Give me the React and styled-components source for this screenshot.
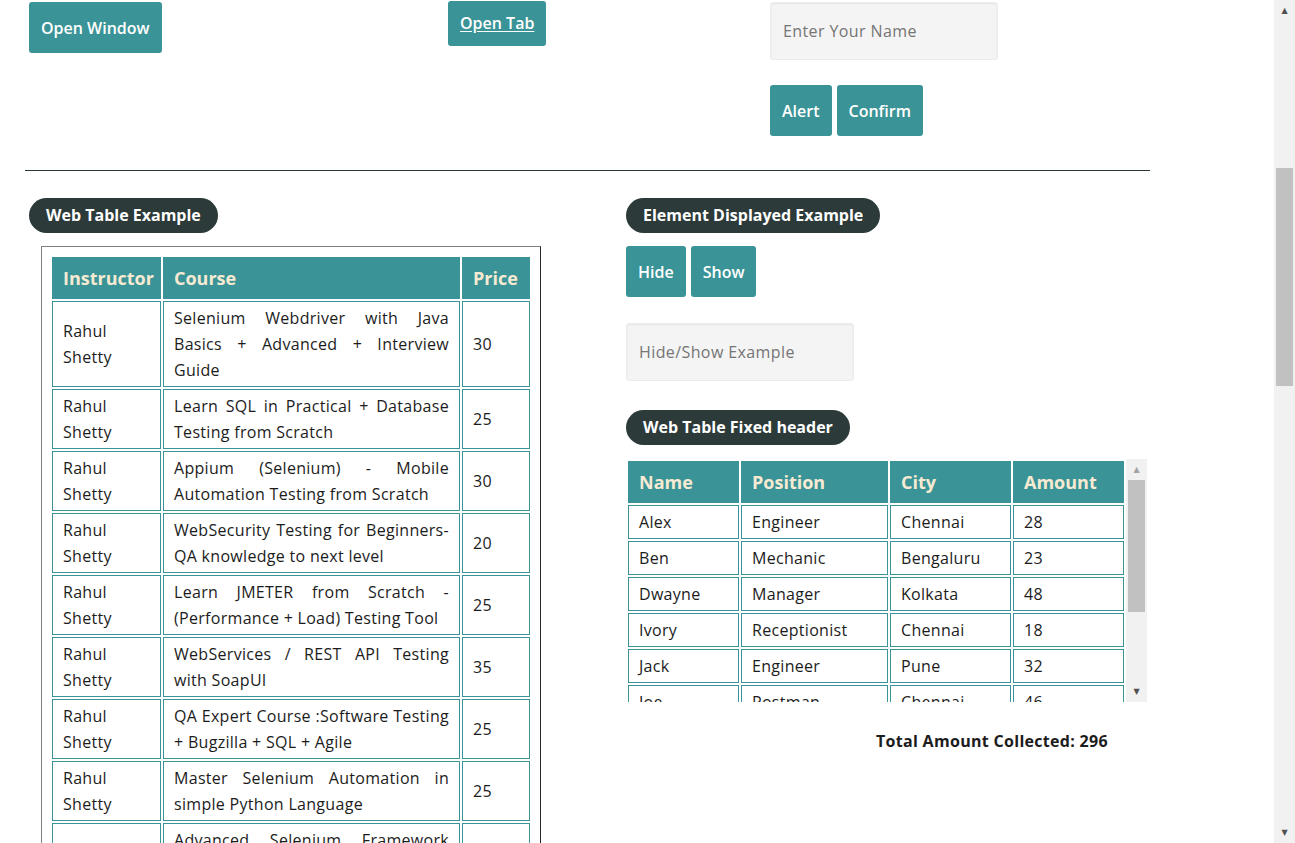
import React from "react";
import styled, { createGlobalStyle } from "styled-components";

const courses = [
  { course: "Selenium Webdriver with Java Basics + Advanced + Interview Guide", price: 30 },
  { course: "Learn SQL in Practical + Database Testing from Scratch", price: 25 },
  { course: "Appium (Selenium) - Mobile Automation Testing from Scratch", price: 30 },
  { course: "WebSecurity Testing for Beginners-QA knowledge to next level", price: 20 },
  { course: "Learn JMETER from Scratch - (Performance + Load) Testing Tool", price: 25 },
  { course: "WebServices / REST API Testing with SoapUI", price: 35 },
  { course: "QA Expert Course :Software Testing + Bugzilla + SQL + Agile", price: 25 },
  { course: "Master Selenium Automation in simple Python Language", price: 25 },
  { course: "Advanced Selenium Framework Pageobject, TestNG, Maven, Cucumber", price: 20 },
  { course: "Write effective QA Resume that will turn to interview call", price: 0 },
];

const people = [
  ["Alex", "Engineer", "Chennai", 28],
  ["Ben", "Mechanic", "Bengaluru", 23],
  ["Dwayne", "Manager", "Kolkata", 48],
  ["Ivory", "Receptionist", "Chennai", 18],
  ["Jack", "Engineer", "Pune", 32],
  ["Joe", "Postman", "Chennai", 46],
  ["Raymond", "Businessman", "Mumbai", 37],
  ["Ronaldo", "Sportsman", "Chennai", 31],
  ["Smith", "Cricketer", "Delhi", 33],
];

// classic scrollbar look (the screenshot was taken with visible scrollbars)
const Scrollbar = ({ offset, size, atTop }) => (
  <Rail>
    <Arrow $dim={atTop}>▲</Arrow>
    <Track>
      <Thumb $offset={offset} $size={size} />
    </Track>
    <Arrow>▼</Arrow>
  </Rail>
);

const App = () => {
  const total = people.reduce((sum, p) => sum + p[3], 0);

  return (
    <>
      <GlobalStyle />
      <Page>
        <TopRow>
          <div>
            <Button>Open Window</Button>
          </div>
          <div>
            <TabLink href="#">Open Tab</TabLink>
          </div>
          <Stack>
            <TextInput placeholder="Enter Your Name" />
            <ButtonGroup>
              <Button>Alert</Button>
              <Button>Confirm</Button>
            </ButtonGroup>
          </Stack>
        </TopRow>

        <Divider />

        <SectionRow>
          <Fieldset>
            <Legend>Web Table Example</Legend>
            <TableBox>
              <Table $w={482}>
                <thead>
                  <tr>
                    <Th $w={109}>Instructor</Th>
                    <Th $w={297}>Course</Th>
                    <Th $w={68}>Price</Th>
                  </tr>
                </thead>
                <tbody>
                  {courses.map((c) => (
                    <tr key={c.course}>
                      <Td>Rahul Shetty</Td>
                      <Td $justify>{c.course}</Td>
                      <Td>{c.price}</Td>
                    </tr>
                  ))}
                </tbody>
              </Table>
            </TableBox>
          </Fieldset>

          <Fieldset>
            <Legend>Element Displayed Example</Legend>
            <ButtonGroup>
              <Button>Hide</Button>
              <Button>Show</Button>
            </ButtonGroup>
            <TextInput placeholder="Hide/Show Example" $top={26} />

            <Legend $top={29}>Web Table Fixed header</Legend>
            <FixedHead>
              <ScrollArea>
                <Table $w={500}>
                  <thead>
                    <tr>
                      <Th $w={111} $sticky>Name</Th>
                      <Th $w={147} $sticky>Position</Th>
                      <Th $w={121} $sticky>City</Th>
                      <Th $w={111} $sticky>Amount</Th>
                    </tr>
                  </thead>
                  <tbody>
                    {people.map((p) => (
                      <tr key={p[0]}>
                        {p.map((v, i) => (
                          <Td key={i}>{v}</Td>
                        ))}
                      </tr>
                    ))}
                  </tbody>
                </Table>
              </ScrollArea>
              <Scrollbar offset={0} size={132} atTop />
            </FixedHead>
            <TotalAmount>Total Amount Collected: {total}</TotalAmount>
          </Fieldset>
        </SectionRow>

        <Divider $top={40} />

        <SectionRow>
          <Fieldset>
            <Legend>Mouse Hover Example</Legend>
            <ButtonGroup>
              <Button>Mouse Hover</Button>
            </ButtonGroup>
          </Fieldset>
        </SectionRow>
      </Page>
      <PageBar>
        <Scrollbar offset={147} size={218} />
      </PageBar>
    </>
  );
};

export default App;

const GlobalStyle = createGlobalStyle`
  html, body {
    scrollbar-width: none;
  }
  body {
    margin: 0;
    background: #fff;
    color: #1c1c1c;
    font-family: "Open Sans", "Noto Sans", sans-serif;
    font-size: 16px;
  }
`;

const Page = styled.div`
  width: 1125px;
  margin-left: 25px;
  padding-bottom: 60px;
`;

const TopRow = styled.div`
  display: grid;
  grid-template-columns: 419px 322px 1fr;
  height: 169px;
  padding: 1px 0 0 4px;
`;

const Stack = styled.div`
  display: flex;
  flex-direction: column;
  align-items: flex-start;
  gap: 25px;
  padding-top: 1px;
`;

const ButtonGroup = styled.div`
  display: flex;
  gap: 5px;
  margin-top: 13px;

  ${Stack} & {
    margin-top: 0;
  }
`;

const Button = styled.button`
  height: 51px;
  padding: 0 12px;
  border: none;
  border-radius: 3px;
  background: #3a9396;
  color: #fff;
  font-family: inherit;
  font-size: 16px;
  font-weight: 600;
  cursor: pointer;

  ${TopRow} > div > & {
    margin-top: 1px;
  }
`;

const TabLink = styled.a`
  display: inline-block;
  padding: 10px 12px;
  line-height: 25px;
  border-radius: 3px;
  background: #3a9396;
  color: #fff;
  font-size: 16px;
  font-weight: 600;
  text-decoration: underline;
  text-underline-offset: 2px;
`;

const TextInput = styled.input`
  box-sizing: border-box;
  width: 228px;
  height: 58px;
  margin-top: ${(p) => p.$top || 0}px;
  padding: 0 12px;
  border: 1px solid #ececec;
  border-radius: 3px;
  background: #f4f4f4;
  box-shadow: inset 0 1px 2px rgba(0, 0, 0, 0.06);
  font-family: inherit;
  font-size: 16px;
  letter-spacing: 0.4px;
  outline: none;

  &::placeholder {
    color: #757575;
  }
`;

const Divider = styled.hr`
  margin: ${(p) => p.$top || 0}px 0 0;
  border: none;
  border-top: 1px solid #2c3a3a;
`;

const SectionRow = styled.div`
  display: grid;
  grid-template-columns: 597px 1fr;
  padding: 27px 0 0 4px;
`;

const Fieldset = styled.section`
  display: flex;
  flex-direction: column;
  align-items: flex-start;
`;

const Legend = styled.div`
  height: 35px;
  margin-top: ${(p) => p.$top || 0}px;
  padding: 0 17px;
  border-radius: 18px;
  background: #2c3a3a;
  color: #fff;
  font-size: 16px;
  font-weight: 700;
  line-height: 35px;
`;

const TableBox = styled.div`
  width: 500px;
  box-sizing: border-box;
  margin: 13px 0 0 12px;
  padding: 8px;
  border: 1px solid;
  border-color: #808080 #2a2a2a #2a2a2a #808080;
`;

const Table = styled.table`
  width: ${(p) => p.$w}px;
  border-spacing: 2px;
  table-layout: fixed;
`;

const Th = styled.th`
  width: ${(p) => p.$w - 22}px;
  padding: 7px 10px;
  border: 1px solid #3a9396;
  background: #3a9396;
  color: #f7ead3;
  font-size: 18px;
  font-weight: 700;
  line-height: 26px;
  text-align: left;
  white-space: nowrap;
  ${(p) =>
    p.$sticky &&
    `
    position: sticky;
    top: 0;
  `}
`;

const Td = styled.td`
  padding: 3px 10px;
  border: 1px solid #3a9396;
  background: #fff;
  line-height: 26px;
  letter-spacing: 0.3px;
  text-align: ${(p) => (p.$justify ? "justify" : "left")};
  vertical-align: middle;
`;

const FixedHead = styled.div`
  display: flex;
  height: 243px;
  margin-top: 14px;
`;

const ScrollArea = styled.div`
  width: 500px;
  overflow-y: auto;
  scrollbar-width: none;
`;

const TotalAmount = styled.div`
  margin-top: 28px;
  padding-left: 250px;
  font-size: 16px;
  font-weight: 700;
  line-height: 22px;
  letter-spacing: 0.3px;
`;

const Rail = styled.div`
  display: flex;
  flex-direction: column;
  width: 21px;
  height: 100%;
  background: #f1f1f1;
`;

const Arrow = styled.div`
  height: 21px;
  color: ${(p) => (p.$dim ? "#a3a3a3" : "#505050")};
  font-family: "DejaVu Sans", sans-serif;
  font-size: 8px;
  line-height: 21px;
  text-align: center;
`;

const Track = styled.div`
  flex: 1;
  padding: 0 2px;
`;

const Thumb = styled.div`
  height: ${(p) => p.$size}px;
  margin-top: ${(p) => p.$offset}px;
  background: #c1c1c1;
`;

const PageBar = styled.div`
  position: fixed;
  top: 0;
  right: 0;
  height: 100vh;
`;
